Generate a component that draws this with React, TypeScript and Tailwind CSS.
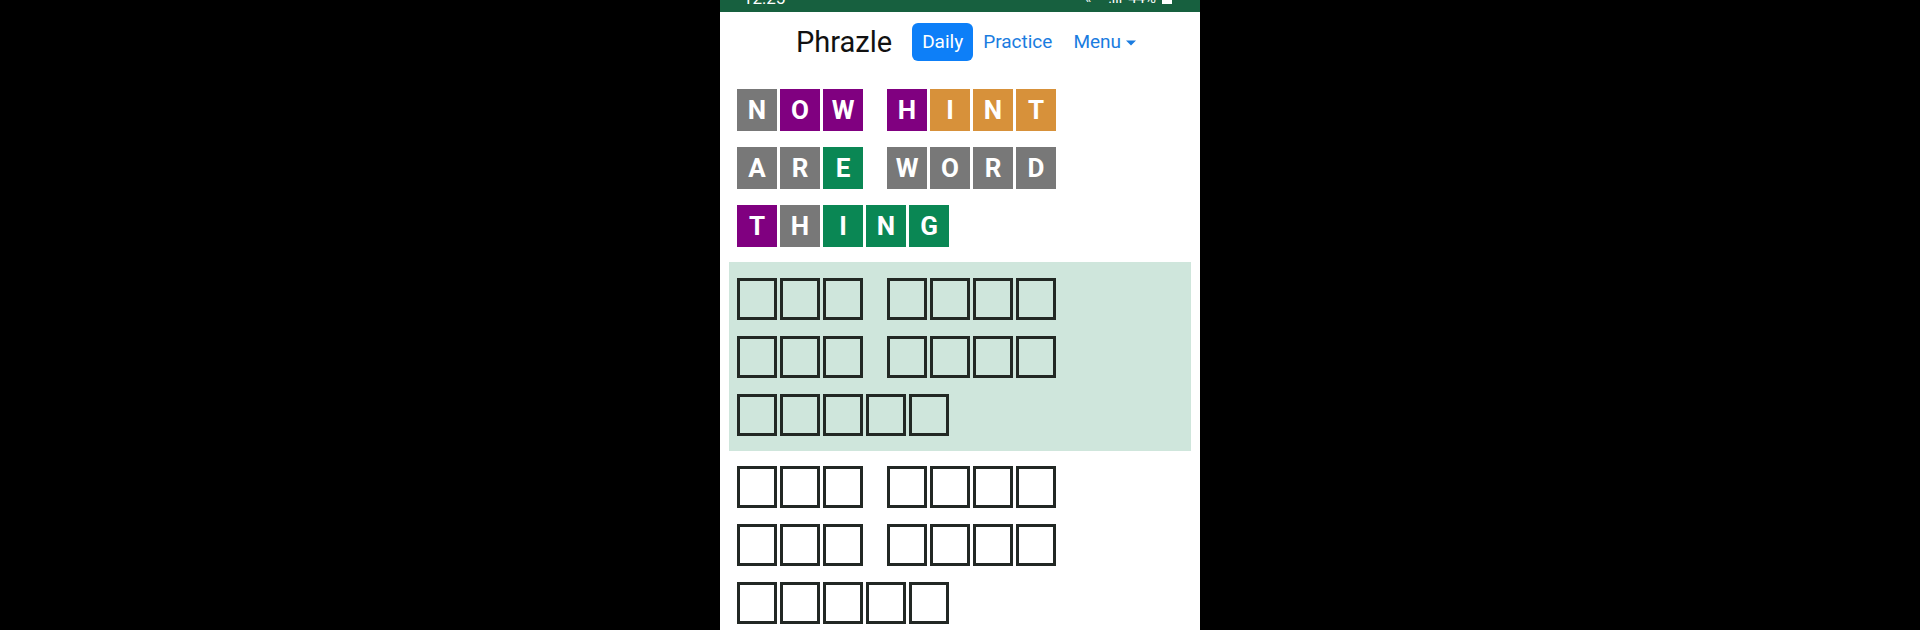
import React from "react";

type C = "g" | "p" | "o" | "e";
const colorCls: Record<C, string> = {
  g: "bg-[#787878]",
  p: "bg-[#800080]",
  o: "bg-[#d7913a]",
  e: "bg-[#0a8754]",
};

function Tile({ ch, c }: { ch: string; c: C }) {
  return (
    <div
      className={`w-[40px] h-[42px] flex items-center justify-center text-white font-bold text-[26px] ${colorCls[c]}`}
    >
      {ch}
    </div>
  );
}

function Empty() {
  return <div className="w-[40px] h-[42px] border-[3px] border-[#222824]" />;
}

function Row({ children }: { children: React.ReactNode }) {
  return <div className="flex gap-[3px] h-[42px]">{children}</div>;
}

function Space() {
  return <div className="w-[18px]" />;
}

function EmptyGrid() {
  return (
    <div className="flex flex-col gap-[16px]">
      <Row>
        <Empty />
        <Empty />
        <Empty />
        <Space />
        <Empty />
        <Empty />
        <Empty />
        <Empty />
      </Row>
      <Row>
        <Empty />
        <Empty />
        <Empty />
        <Space />
        <Empty />
        <Empty />
        <Empty />
        <Empty />
      </Row>
      <Row>
        <Empty />
        <Empty />
        <Empty />
        <Empty />
        <Empty />
      </Row>
    </div>
  );
}

export default function App() {
  return (
    <div
      className="w-[1920px] h-[630px] bg-black flex justify-center overflow-hidden"
      style={{ fontFamily: "Roboto, 'Liberation Sans', sans-serif" }}
    >
      <div className="w-[480px] h-[630px] bg-white flex flex-col">
        {/* status bar */}
        <div className="h-[12px] bg-[#17603f] overflow-hidden flex items-start justify-between pl-[23px] pr-[28px] text-white">
          <div className="text-[17px] leading-none mt-[-10px]">12:25</div>
          <div className="flex items-start gap-[6px] mt-[-10px]">
            <span className="text-[14px] leading-none mt-[1px]">«</span>
            <span className="text-[14px] leading-none mt-[1px]">·· .ıll</span>
            <span className="text-[15px] leading-none mt-[1px]">44%</span>
            <div className="w-[10px] h-[15px] bg-white mt-[-1px]" />
          </div>
        </div>

        {/* header */}
        <div className="h-[60px] flex items-center pl-[76px]">
          <div className="text-[29px] text-[#111] leading-none mr-[20px]">Phrazle</div>
          <div className="h-[38px] px-[10px] rounded-[6px] bg-[#0d7ff8] text-white text-[19px] flex items-center">
            Daily
          </div>
          <div className="text-[19px] text-[#1a7ce0] ml-[10px]">Practice</div>
          <div className="text-[19px] text-[#1a7ce0] ml-[21px] flex items-center">
            Menu
            <svg width="12" height="8" viewBox="0 0 12 8" className="ml-[4px] mt-[2px]">
              <path d="M1 1.5 L11 1.5 L6 6.5 Z" fill="#1a7ce0" />
            </svg>
          </div>
        </div>

        {/* guesses */}
        <div className="flex flex-col gap-[16px] px-[17px] pt-[17px]">
          <Row>
            <Tile ch="N" c="g" />
            <Tile ch="O" c="p" />
            <Tile ch="W" c="p" />
            <Space />
            <Tile ch="H" c="p" />
            <Tile ch="I" c="o" />
            <Tile ch="N" c="o" />
            <Tile ch="T" c="o" />
          </Row>
          <Row>
            <Tile ch="A" c="g" />
            <Tile ch="R" c="g" />
            <Tile ch="E" c="e" />
            <Space />
            <Tile ch="W" c="g" />
            <Tile ch="O" c="g" />
            <Tile ch="R" c="g" />
            <Tile ch="D" c="g" />
          </Row>
          <Row>
            <Tile ch="T" c="p" />
            <Tile ch="H" c="g" />
            <Tile ch="I" c="e" />
            <Tile ch="N" c="e" />
            <Tile ch="G" c="e" />
          </Row>
        </div>

        <div className="mx-[9px] mt-[15px] bg-[#cfe6dc] px-[8px] pt-[16px] pb-[15px]">
          <EmptyGrid />
        </div>

        <div className="px-[17px] pt-[15px]">
          <EmptyGrid />
        </div>
      </div>
    </div>
  );
}
